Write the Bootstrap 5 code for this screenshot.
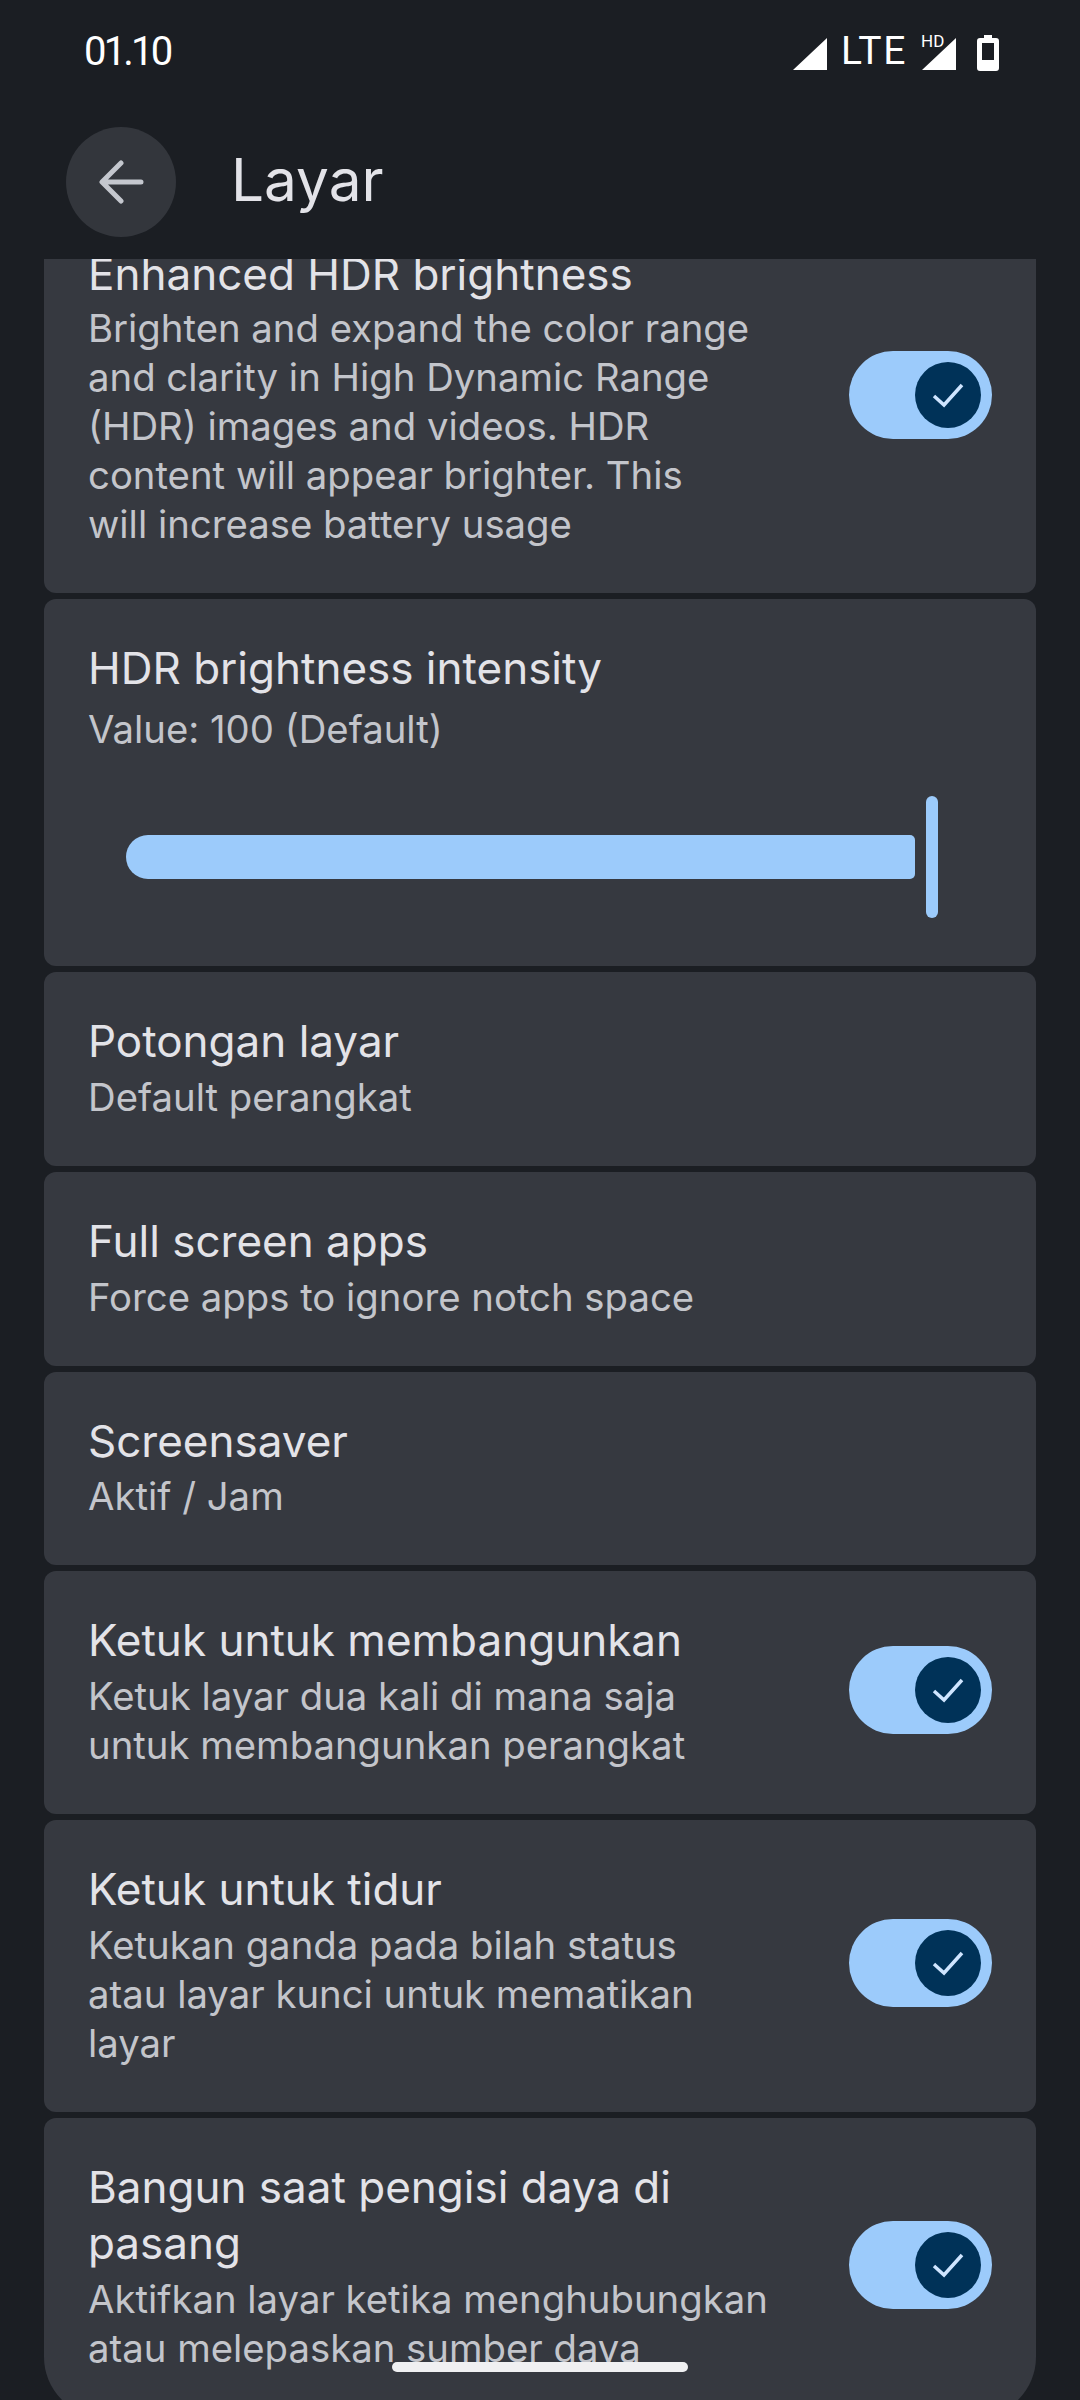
<!DOCTYPE html>
<html lang="id">
<head>
<meta charset="UTF-8">
<meta name="viewport" content="width=device-width, initial-scale=1.0">
<title>Layar</title>
<link href="https://cdn.jsdelivr.net/npm/bootstrap@5.3.0/dist/css/bootstrap.min.css" rel="stylesheet">
<style>
    body {
        background: #1b1e23;
        font-family: Inter, Roboto, sans-serif;
        color: #e3e3e8;
    }

    .phone {
        width: 1080px;
        height: 2400px;
        overflow: hidden;
        position: relative;
    }

    .status-bar {
        height: 105px;
        padding: 29px 81px 0 84px;
        color: #fff;
    }

    .clock {
        font-family: Roboto, sans-serif;
        font-size: 40px;
        line-height: 46px;
        letter-spacing: -2.8px;
    }

    .lte {
        font-family: Roboto, sans-serif;
        font-size: 39px;
        line-height: 44px;
        letter-spacing: 1.6px;
        margin: 0 10px 0 13px;
    }

    .hd {
        font-family: Roboto, sans-serif;
        font-size: 17px;
        line-height: 17px;
        position: absolute;
        left: 4px;
        top: 4px;
    }

    .signal-wrap {
        position: relative;
        padding-left: 4px;
    }

    .status-icon {
        margin-top: 8px;
        display: block;
    }

    .battery-icon {
        margin: 6px 0 0 20px;
    }

    .app-bar {
        height: 154px;
        padding-left: 66px;
    }

    .back-btn {
        width: 110px;
        height: 110px;
        margin-top: 22px;
        background: #33363c;
    }

    .page-title {
        font-size: 58.5px;
        line-height: 70px;
        margin: 40px 0 0 55px;
        color: #e3e3e8;
    }

    .list-clip {
        height: 2141px;
        overflow: hidden;
        padding: 0 44px;
    }

    .set-list {
        margin-top: -56px;
    }

    .set-item {
        background: #363940;
        border-radius: 12px;
        padding: 44px;
        margin-bottom: 6.2px;
    }

    .set-item.last-item {
        border-radius: 12px 12px 60px 60px;
    }

    .set-title {
        font-size: 44px;
        line-height: 56.5px;
        margin: -3px 0 3px;
        color: #e3e3e8;
        white-space: nowrap;
    }

    .set-title.clipped-title {
        margin: -1px 0 1px;
    }

    .set-sub {
        font-size: 38.3px;
        line-height: 49px;
        color: #c3c5cb;
        white-space: nowrap;
    }

    .value-text {
        margin-top: 9px;
    }

    .toggle-on {
        width: 143px;
        height: 88px;
        background: #9ccbfb;
        padding-right: 11px;
        margin-bottom: 5px;
    }

    .toggle-knob {
        width: 66px;
        height: 66px;
        background: #003258;
    }

    .slider-row {
        height: 122px;
        margin: 42px 0 4px;
        padding: 0 54px 0 38px;
    }

    .slider-fill {
        height: 44px;
        background: #9ccbfb;
        border-radius: 22px 5px 5px 22px;
    }

    .slider-handle {
        width: 12px;
        height: 122px;
        background: #9ccbfb;
        margin-left: 11px;
    }

    .home-bar {
        position: absolute;
        left: 392px;
        top: 2362px;
        width: 296px;
        height: 10px;
        border-radius: 5px;
        background: #f0f0f2;
    }
</style>
</head>

<body>
<div class="phone">
    <div class="status-bar d-flex justify-content-between">
        <div class="clock">01.10</div>
        <div class="d-flex align-items-start">
            <svg class="status-icon" width="36" height="34" viewBox="0 0 36 34"><path d="M35 1V33H1Z" fill="#fff"/></svg>
            <div class="lte">LTE</div>
            <div class="signal-wrap">
                <span class="hd">HD</span>
                <svg class="status-icon" width="36" height="34" viewBox="0 0 36 34"><path d="M35 1V33H1Z" fill="#fff"/></svg>
            </div>
            <svg class="battery-icon" width="22" height="36" viewBox="0 0 22 36"><path fill-rule="evenodd" d="M7 0h8v3h4a3 3 0 0 1 3 3v27a3 3 0 0 1-3 3H3a3 3 0 0 1-3-3V6a3 3 0 0 1 3-3h4ZM5 8v17h12V8Z" fill="#fff"/></svg>
        </div>
    </div>

    <div class="app-bar d-flex align-items-start">
        <div class="back-btn rounded-circle d-flex align-items-center justify-content-center">
            <svg width="46" height="44" viewBox="0 0 46 44"><path d="M43 22H5M23 3 4 22l19 19" fill="none" stroke="#c4c7ce" stroke-width="5" stroke-linecap="round" stroke-linejoin="round"/></svg>
        </div>
        <div class="page-title">Layar</div>
    </div>

    <div class="list-clip">
        <div class="set-list">
            <div class="set-item d-flex justify-content-between align-items-center">
                <div>
                    <div class="set-title clipped-title">Enhanced HDR brightness</div>
                    <div class="set-sub">Brighten and expand the color range<br>and clarity in High Dynamic Range<br>(HDR) images and videos. HDR<br>content will appear brighter. This<br>will increase battery usage</div>
                </div>
                <div class="toggle-on rounded-pill d-flex align-items-center justify-content-end">
                    <div class="toggle-knob rounded-circle d-flex align-items-center justify-content-center">
                        <svg width="32" height="26" viewBox="0 0 32 26"><path d="M2 14l10 9L30 3" fill="none" stroke="#cfe5ff" stroke-width="3.5"/></svg>
                    </div>
                </div>
            </div>

            <div class="set-item">
                <div class="set-title">HDR brightness intensity</div>
                <div class="set-sub value-text">Value: 100 (Default)</div>
                <div class="slider-row d-flex align-items-center">
                    <div class="slider-fill flex-grow-1"></div>
                    <div class="slider-handle rounded-pill"></div>
                </div>
            </div>

            <div class="set-item">
                <div class="set-title">Potongan layar</div>
                <div class="set-sub">Default perangkat</div>
            </div>

            <div class="set-item">
                <div class="set-title">Full screen apps</div>
                <div class="set-sub">Force apps to ignore notch space</div>
            </div>

            <div class="set-item">
                <div class="set-title">Screensaver</div>
                <div class="set-sub">Aktif / Jam</div>
            </div>

            <div class="set-item d-flex justify-content-between align-items-center">
                <div>
                    <div class="set-title">Ketuk untuk membangunkan</div>
                    <div class="set-sub">Ketuk layar dua kali di mana saja<br>untuk membangunkan perangkat</div>
                </div>
                <div class="toggle-on rounded-pill d-flex align-items-center justify-content-end">
                    <div class="toggle-knob rounded-circle d-flex align-items-center justify-content-center">
                        <svg width="32" height="26" viewBox="0 0 32 26"><path d="M2 14l10 9L30 3" fill="none" stroke="#cfe5ff" stroke-width="3.5"/></svg>
                    </div>
                </div>
            </div>

            <div class="set-item d-flex justify-content-between align-items-center">
                <div>
                    <div class="set-title">Ketuk untuk tidur</div>
                    <div class="set-sub">Ketukan ganda pada bilah status<br>atau layar kunci untuk mematikan<br>layar</div>
                </div>
                <div class="toggle-on rounded-pill d-flex align-items-center justify-content-end">
                    <div class="toggle-knob rounded-circle d-flex align-items-center justify-content-center">
                        <svg width="32" height="26" viewBox="0 0 32 26"><path d="M2 14l10 9L30 3" fill="none" stroke="#cfe5ff" stroke-width="3.5"/></svg>
                    </div>
                </div>
            </div>

            <div class="set-item last-item d-flex justify-content-between align-items-center">
                <div>
                    <div class="set-title">Bangun saat pengisi daya di<br>pasang</div>
                    <div class="set-sub">Aktifkan layar ketika menghubungkan<br>atau melepaskan sumber daya</div>
                </div>
                <div class="toggle-on rounded-pill d-flex align-items-center justify-content-end">
                    <div class="toggle-knob rounded-circle d-flex align-items-center justify-content-center">
                        <svg width="32" height="26" viewBox="0 0 32 26"><path d="M2 14l10 9L30 3" fill="none" stroke="#cfe5ff" stroke-width="3.5"/></svg>
                    </div>
                </div>
            </div>
        </div>
    </div>

    <div class="home-bar"></div>
</div>
<script src="https://cdn.jsdelivr.net/npm/bootstrap@5.3.0/dist/js/bootstrap.bundle.min.js"></script>
</body>
</html>
